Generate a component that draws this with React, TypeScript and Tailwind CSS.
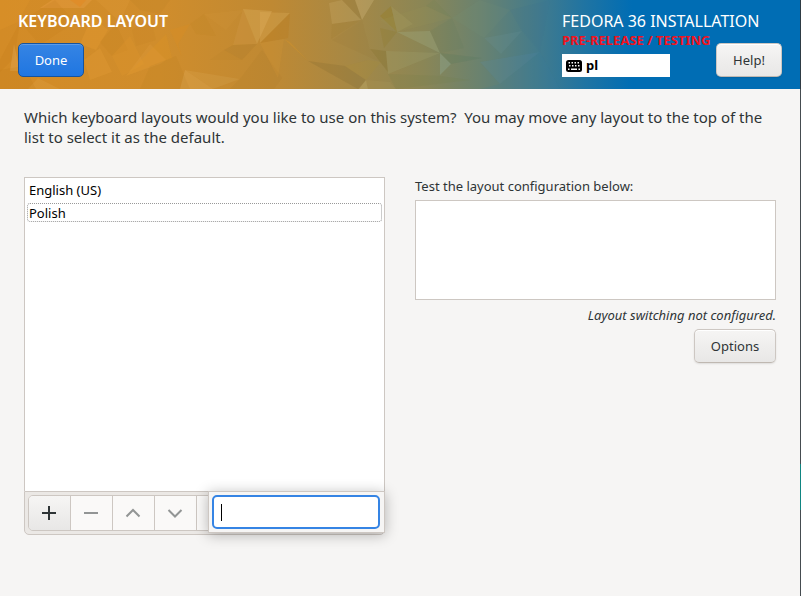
import { useState } from "react";
import type { ButtonHTMLAttributes } from "react";
import clsx from "clsx";

type Facet = [points: string, fill: string, opacity: number];

const facets: Facet[] = [
  ["0,0 30,0 18,22 0,30", "#f0a030", 0.25],
  ["52,0 92,0 84,8 40,8", "#ffb060", 0.3],
  ["20,22 55,0 75,22 40,45", "#b87010", 0.14],
  ["0,60 20,22 14,58 0,72", "#b87010", 0.18],
  ["14,44 20,71 10,71", "#ffe0b0", 0.2],
  ["92,16 108,30 96,50 80,44", "#ffb040", 0.22],
  ["70,0 86,0 80,7", "#f08010", 0.35],
  ["96,0 130,0 120,22", "#f0b050", 0.2],
  ["130,0 170,0 160,14 140,10", "#a87020", 0.12],
  ["84,60 100,48 112,72 90,80", "#f0a840", 0.3],
  ["100,42 116,24 128,50 112,56", "#b07018", 0.14],
  ["112,56 130,36 144,64 122,76", "#eaa030", 0.25],
  ["126,76 150,44 166,60 160,64", "#eaa84a", 0.25],
  ["126,76 166,34 172,58", "#f0a020", 0.2],
  ["132,30 150,16 156,40 136,46", "#b07820", 0.13],
  ["170,30 190,24 178,44 182,57", "#f09018", 0.22],
  ["185,70 213,89 180,89", "#ffd890", 0.22],
  ["185,70 240,79 213,89", "#ffe0a0", 0.12],
  ["190,24 204,14 216,36 196,34", "#c08020", 0.2],
  ["204,14 243,10 226,30", "#dda040", 0.2],
  ["243,9 272,11 257,44", "#ffdc98", 0.24],
  ["243,9 257,44 233,45", "#ffdc98", 0.1],
  ["233,45 257,44 242,60 224,50", "#94702a", 0.2],
  ["224,50 242,60 210,60", "#b08028", 0.15],
  ["240,79 262,50 282,78 274,89 230,89", "#a07028", 0.15],
  ["28,89 38,78 60,89", "#ffd080", 0.15],
  ["0,70 24,66 36,89 0,89", "#a86810", 0.14],
  ["150,66 176,56 190,89 140,89", "#a87018", 0.12],
  ["260,12 290,13 260,43", "#ffd080", 0.22],
  ["290,13 288,38 260,43", "#b87010", 0.28],
  ["260,43 284,39 278,78", "#f0a838", 0.16],
  ["284,39 290,42 308,61", "#eea020", 0.3],
  ["329,3 342,0 361,20 332,24", "#e8cc90", 0.22],
  ["342,0 355,0 362,20", "#806828", 0.15],
  ["355,0 374,0 362,20", "#ffe8b0", 0.25],
  ["332,24 361,20 331,39", "#9c7028", 0.16],
  ["332,40 362,20 370,50 380,62", "#957838", 0.16],
  ["308,61 345,66 366,80 358,89", "#705c28", 0.24],
  ["345,66 368,60 381,62 366,80", "#b09030", 0.22],
  ["366,80 368,89 359,89", "#e0d090", 0.28],
  ["366,80 390,82 396,89 368,89", "#c4b470", 0.14],
  ["380,16 391,6 397,32", "#987808", 0.35],
  ["391,6 413,24 397,32", "#b8b070", 0.25],
  ["380,28 397,32 384,48", "#907820", 0.3],
  ["370,49 386,51 388,72", "#7c6820", 0.32],
  ["386,51 440,53 388,74", "#a8ab78", 0.3],
  ["397,32 430,31 440,53", "#a6b38c", 0.4],
  ["380,20 426,6 452,18 397,32", "#a09c58", 0.18],
  ["426,6 434,0 452,18", "#748454", 0.25],
  ["430,31 452,18 464,48 440,53", "#607c60", 0.2],
  ["440,53 451,64 440,75", "#9cc0b4", 0.35],
  ["440,53 482,58 451,64", "#54785e", 0.3],
  ["388,74 440,76 470,80 396,89", "#74814a", 0.22],
  ["484,38 522,31 501,54", "#7198a0", 0.25],
  ["480,62 540,52 500,84", "#5990b4", 0.24],
  ["452,18 480,0 510,10 484,38", "#75927c", 0.22],
  ["510,10 550,0 540,52 522,31", "#3c7495", 0.15],
  ["500,84 540,52 560,89 480,89", "#397da8", 0.16],
];

function HeaderArtwork() {
  return (
    <svg aria-hidden="true" viewBox="0 0 800 89" preserveAspectRatio="none" className="absolute inset-0 h-full w-full">
      <defs>
        <linearGradient id="banner">
          <stop offset="0" stopColor="#d38b26" />
          <stop offset="0.2" stopColor="#d08d2c" />
          <stop offset="0.34" stopColor="#bf8933" />
          <stop offset="0.44" stopColor="#a68845" />
          <stop offset="0.53" stopColor="#8a8656" />
          <stop offset="0.6" stopColor="#6a826f" />
          <stop offset="0.67" stopColor="#447b8b" />
          <stop offset="0.73" stopColor="#2074a2" />
          <stop offset="0.79" stopColor="#006db4" />
          <stop offset="1" stopColor="#006db4" />
        </linearGradient>
      </defs>
      <rect width="800" height="89" fill="url(#banner)" />
      <g opacity="0.7">
        {facets.map(([points, fill, opacity]) => (
          <polygon key={points} points={points} fill={fill} opacity={opacity} />
        ))}
      </g>
    </svg>
  );
}

function KeyboardIcon() {
  return (
    <svg aria-hidden="true" viewBox="0 0 16 12" className="h-3 w-4">
      <rect width="16" height="12" rx="2.5" fill="#000" />
      <g fill="#fff">
        <path d="M2.500 2h1.500v1.500H2.500zM5.500 2H7v1.500H5.500zM8.500 2H10v1.500H8.500zM11.500 2H13v1.500h-1.500z" />
        <path d="M3 5h1.500v1.500H3zM6 5h1.500v1.500H6zM9 5h1.500v1.500H9zM12 5h1.500v1.500H12z" />
        <path d="M2 8.500h1.500V10H2zM5 8.500h6V10H5zM12.500 8.500H14V10h-1.500z" />
      </g>
    </svg>
  );
}

function Button({ className, ...props }: ButtonHTMLAttributes<HTMLButtonElement>) {
  return (
    <button
      type="button"
      className={clsx("h-[34px] shrink-0 rounded-[5px] border pt-0.5 text-[13px]", className)}
      {...props}
    />
  );
}

const plainButton =
  "border-[#cdc7c2] border-b-[#bfb8b1] bg-linear-to-b from-[#f6f5f4] to-[#e8e7e6] text-[#2e3436] shadow-[0_1px_2px_rgba(0,0,0,0.1),inset_0_1px_#fff]";

const tools = [
  { label: "Add layout", path: "M8 1v14M1 8h14", enabled: true },
  { label: "Remove layout", path: "M1 8h14", enabled: false },
  { label: "Move layout up", path: "M1.5 11.5L8 5l6.500 6.500", enabled: false },
  { label: "Move layout down", path: "M1.500 5L8 11.500L14.500 5", enabled: false },
  { label: "Preview layout", path: "", enabled: false },
];

export default function App() {
  const [selected, setSelected] = useState("");

  return (
    <div className="flex min-h-screen bg-[#f6f5f4] font-['Noto_Sans','Open_Sans',sans-serif] text-[13px] text-[#2e3436]">
      <div className="min-w-0 flex-1">
        <header className="relative flex h-[89px] justify-between px-[18px] pb-3 pt-[10px]">
          <HeaderArtwork />
          <div className="relative flex flex-col items-start justify-between">
            <h1 className="text-[16px] leading-[22px] font-semibold text-white">KEYBOARD LAYOUT</h1>
            <Button className="w-[66px] border-[#15539e] bg-linear-to-b from-[#3584e4] to-[#1f76e1] text-white shadow-[inset_0_1px_rgba(255,255,255,0.2)]">
              Done
            </Button>
          </div>
          <div className="relative flex w-[220px] items-end">
            <div className="w-[154px] whitespace-nowrap">
              <p className="text-[16px] leading-[22px] text-white">FEDORA 36 INSTALLATION</p>
              <p className="text-[13px] leading-4 font-bold text-[#f0141e]">PRE-RELEASE / TESTING</p>
              <div className="mt-[6px] flex h-[23px] w-[108px] items-center gap-1 bg-white px-1 font-bold text-black">
                <KeyboardIcon />
                <span>pl</span>
              </div>
            </div>
            <Button className={clsx("w-[66px]", plainButton)}>Help!</Button>
          </div>
        </header>

        <main className="px-6 pt-[18px]">
          <p className="text-[15px] leading-5">
            Which keyboard layouts would you like to use on this system?&nbsp; You may move any layout to the top of the
            list to select it as the default.
          </p>

          <div className="mt-[30px] grid grid-cols-2 gap-[30px]">
            <section>
              <ul role="listbox" aria-label="Keyboard layouts" className="h-[314px] border border-b-0 border-[#cdc7c2] bg-white p-0.5 text-black">
                {["English (US)", "Polish"].map((name) => (
                  <li
                    key={name}
                    role="option"
                    aria-selected={selected === name}
                    onClick={() => setSelected(name)}
                    className={clsx(
                      "mb-1 h-[19px] rounded-[3px] border px-px leading-[19px]",
                      name === "Polish" ? "border-dotted border-[#999999]" : "border-transparent",
                    )}
                  >
                    {name}
                  </li>
                ))}
              </ul>
              <div className="relative h-11 rounded-b-[5px] border border-[#cdc7c2] bg-[#ebe8e5] p-[3px]">
                <div className="flex h-9 w-[212px] divide-x divide-[#cdc7c2] overflow-hidden rounded-[5px] border border-[#cdc7c2]">
                  {tools.map((tool) => (
                    <button
                      key={tool.label}
                      type="button"
                      aria-label={tool.label}
                      disabled={!tool.enabled}
                      className={clsx(
                        "flex w-[42px] shrink-0 items-center justify-center pr-0.5",
                        tool.enabled ? "bg-linear-to-b from-[#f6f5f4] to-[#e8e7e6] text-[#2e3436]" : "bg-[#faf9f8] text-[#929595]",
                      )}
                    >
                      <svg aria-hidden="true" viewBox="0 0 16 16" className="size-4" fill="none" stroke="currentColor" strokeWidth="2">
                        <path d={tool.path} />
                      </svg>
                    </button>
                  ))}
                </div>
                <div className="absolute -top-px -right-px w-[177px] border border-[#cdc7c2] bg-[#f6f5f4] p-[3px] shadow-[0_2px_14px_rgba(0,0,0,0.28)]">
                  <input
                    type="search"
                    aria-label="Search layouts"
                    className="block h-[34px] w-[168px] rounded-[5px] border-2 border-[#3584e4] bg-white px-[7px] text-black caret-transparent outline-none"
                  />
                  <span aria-hidden="true" className="absolute top-3 left-3 h-[17px] w-px bg-black" />
                </div>
              </div>
            </section>

            <section className="flex flex-col items-end">
              <label htmlFor="layout-test" className="self-start leading-[18px]">
                Test the layout configuration below:
              </label>
              <textarea id="layout-test" className="mt-[5px] block h-[100px] w-full resize-none border border-[#cdc7c2] bg-white p-1 outline-none" />
              <p className="mt-[6px] leading-[18px] italic">Layout switching not configured.</p>
              <Button className={clsx("mt-[5px] w-[82px]", plainButton)}>Options</Button>
            </section>
          </div>
        </main>
      </div>
      <div aria-hidden="true" className="flex w-px flex-col bg-[#454c50]">
        <div className="h-[89px] bg-[#2e3b44]" />
        <div className="mt-[375px] h-[46px] bg-[#0f8581]" />
      </div>
    </div>
  );
}
